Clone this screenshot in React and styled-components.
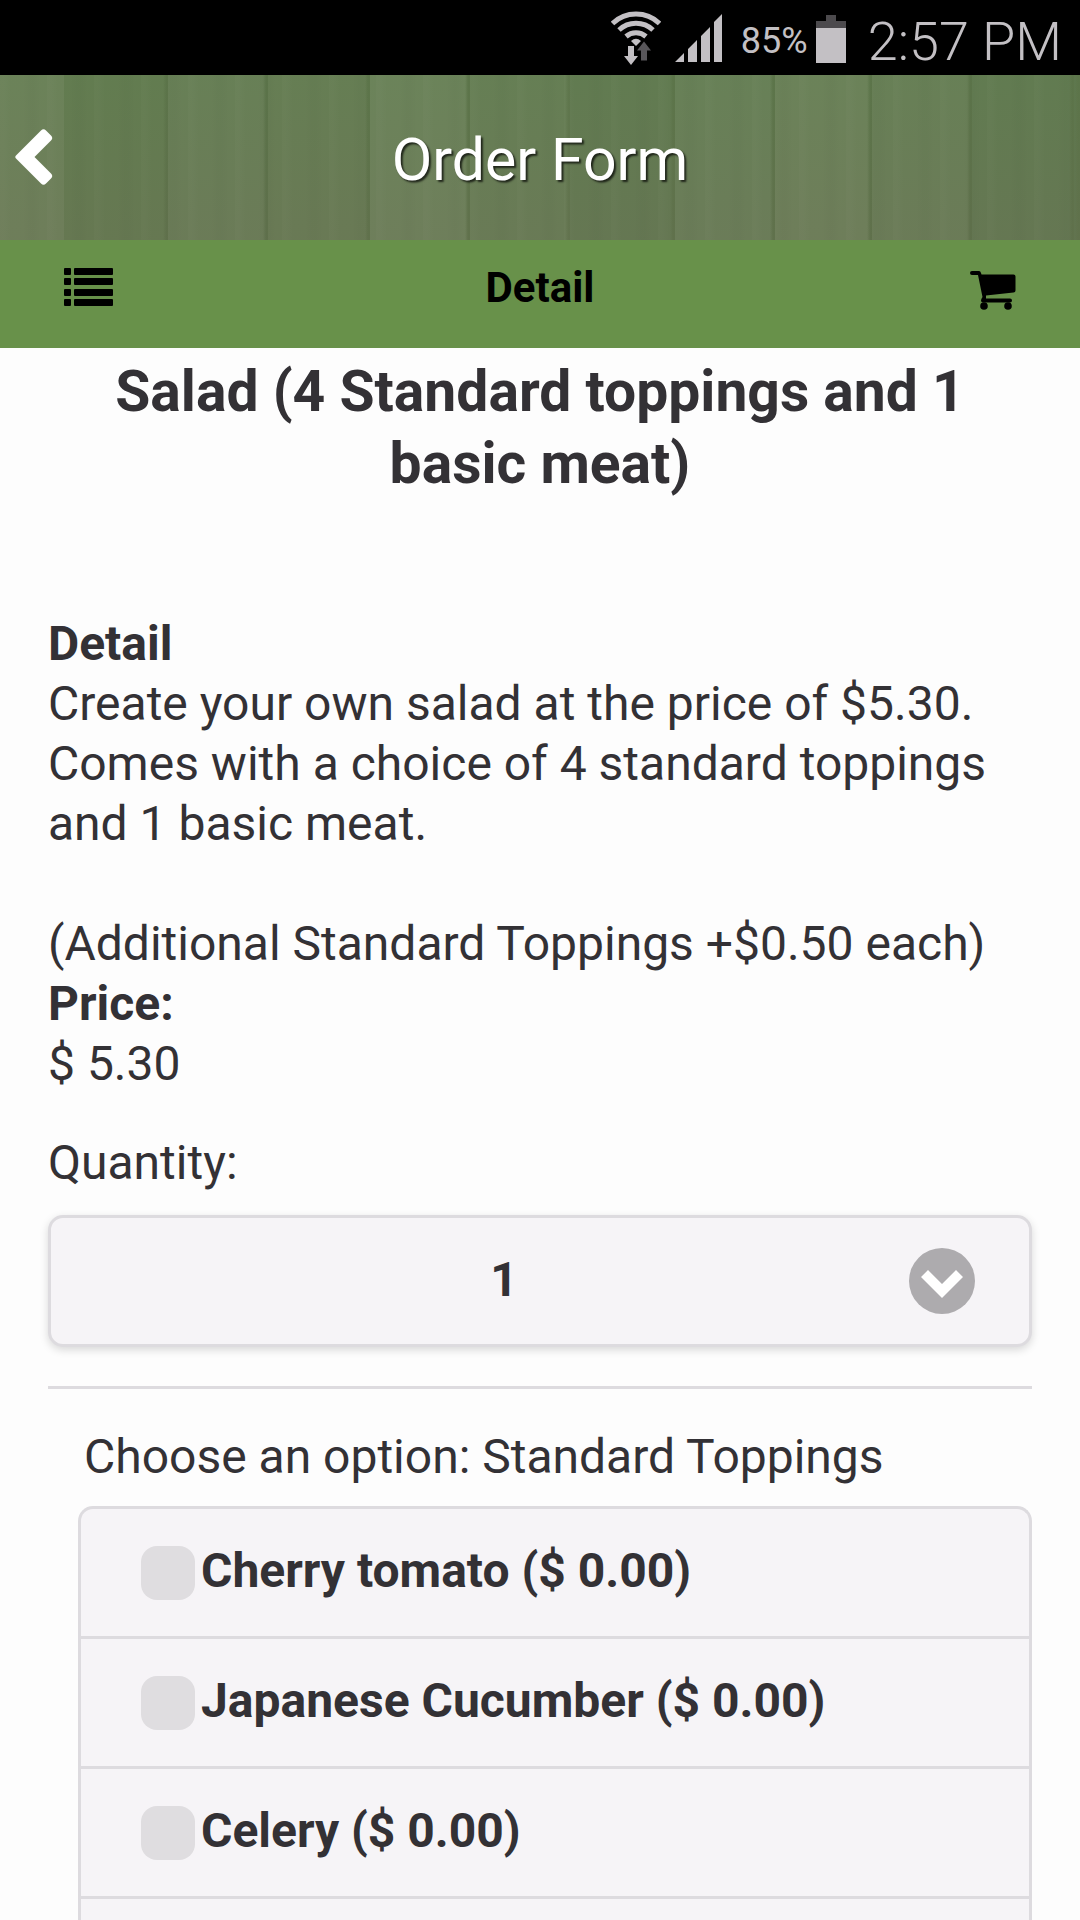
import React, { useState } from 'react';
import styled, { createGlobalStyle } from 'styled-components';

const GlobalStyle = createGlobalStyle`
  *, *::before, *::after { box-sizing: border-box; }
  body {
    margin: 0;
    background: #fdfdfd;
    color: #333135;
    font-family: Roboto, "Liberation Sans", sans-serif;
    font-size: 48px;
    line-height: 60px;
  }
`;

const Screen = styled.div`
  display: flex;
  flex-direction: column;
  height: 100vh;
  overflow: hidden;
`;

const StatusBar = styled.div`
  flex: none;
  display: flex;
  justify-content: flex-end;
  align-items: center;
  height: 75px;
  padding: 0 18px;
  background: #000;
  color: #c3c0c4;

  svg { display: block; flex: none; }
`;

const SignalGroup = styled.span`
  margin-left: 14px;
`;

const BatteryLevel = styled.span`
  margin: 6px 8px 0 18px;
  font-size: 36px;
`;

const BatteryGroup = styled.span`
  margin-top: 2px;
`;

const Clock = styled.span`
  margin: 8px 0 0 22px;
  font-size: 54px;
  font-weight: 300;
`;

const planks = [
  [0, 64, '#6c815a'],
  [64, 168, '#627a50'],
  [168, 268, '#687e57'],
  [268, 370, '#667c54'],
  [370, 470, '#6c825b'],
  [470, 570, '#667d55'],
  [570, 675, '#617951'],
  [675, 775, '#687f58'],
  [775, 872, '#6c815a'],
  [872, 972, '#687e57'],
  [972, 1074, '#617951'],
  [1074, 1080, '#5d754d'],
];

const percent = (x) => `${(x / 10.8).toFixed(2)}%`;

const plankStops = planks
  .map(([from, to, tone], i) => {
    const seam = i === 0 ? tone : '#5b7249';
    return `${tone} ${percent(from)}, ${tone} ${percent(to - 5)}, ${seam} ${percent(to - 2)}, ${seam} ${percent(to)}`;
  })
  .join(', ');

const TitleBar = styled.header`
  flex: none;
  display: grid;
  grid-template-columns: 120px 1fr 120px;
  align-items: center;
  height: 165px;
  background:
    linear-gradient(180deg, rgba(100, 140, 80, 0.12), rgba(120, 110, 90, 0.18)),
    repeating-linear-gradient(90deg, rgba(255, 255, 255, 0.02) 0 4px, transparent 11px 23px, rgba(0, 0, 0, 0.02) 30px 34px, transparent 41px 47px),
    linear-gradient(90deg, ${plankStops});
`;

const Title = styled.h1`
  margin: 0;
  padding-top: 4px;
  color: #fff;
  font-size: 59px;
  font-weight: 400;
  line-height: 72px;
  text-align: center;
  text-shadow: 2px 2px 2px rgba(0, 0, 0, 0.7);
`;

const IconButton = styled.button`
  display: flex;
  justify-content: ${(p) => (p.$end ? 'flex-end' : 'flex-start')};
  align-items: center;
  height: 100%;
  padding: 0 ${(p) => p.$inset}px;
  border: 0;
  background: none;
  color: ${(p) => (p.$light ? '#fff' : '#000')};
  cursor: pointer;
`;

const Toolbar = styled.nav`
  flex: none;
  display: grid;
  grid-template-columns: 200px 1fr 200px;
  align-items: center;
  height: 108px;
  padding-bottom: 12px;
  background: #68914a;
`;

const ToolbarTitle = styled.h2`
  margin: 0;
  color: #000;
  font-size: 42px;
  font-weight: 700;
  line-height: 48px;
  text-align: center;
`;

const Content = styled.main`
  flex: 1;
  display: flex;
  flex-direction: column;
  min-height: 0;
  padding: 8px 48px 0;
`;

const ItemName = styled.h3`
  margin: 0 0 114px;
  padding: 0 48px;
  font-size: 57px;
  font-weight: 700;
  line-height: 72px;
  text-align: center;
`;

const Details = styled.dl`
  margin: 0 0 39px;

  dt { font-weight: 700; }
  dd { margin: 0; }
  p { margin: 0 0 60px; }
  p:last-child { margin: 0; }
`;

const FieldLabel = styled.label`
  margin-bottom: 22px;
`;

const SelectBox = styled.div`
  display: grid;
  align-items: center;

  > * { grid-area: 1 / 1; }
  svg { justify-self: end; margin-right: 57px; pointer-events: none; }
`;

const Select = styled.select`
  appearance: none;
  width: 100%;
  height: 132px;
  padding: 0 117px 3px 45px;
  border: 3px solid #dddbdf;
  border-radius: 15px;
  background: #f6f4f7;
  box-shadow: 0 3px 9px rgba(0, 0, 0, 0.15);
  color: inherit;
  font: 700 48px Roboto, "Liberation Sans", sans-serif;
  text-align: center;
  text-align-last: center;
`;

const Divider = styled.hr`
  width: 100%;
  height: 3px;
  margin: 39px 0 38px;
  border: 0;
  background: #dddbdf;
`;

const Options = styled.fieldset`
  flex: 1;
  display: flex;
  flex-direction: column;
  min-width: 0;
  min-height: 0;
  margin: 0 0 0 30px;
  padding: 0;
  border: 0;
`;

const OptionsLegend = styled.legend`
  padding: 0 6px;
  margin-bottom: 19px;
`;

const OptionList = styled.div`
  flex: 1;
  border: solid #dddbdf;
  border-width: 3px 3px 0;
  border-radius: 15px 15px 0 0;
  background: #f6f4f7;
`;

const Option = styled.label`
  display: flex;
  align-items: center;
  gap: 6px;
  height: 130px;
  padding-left: 60px;
  border-bottom: 3px solid #dddbdf;
  font-weight: 700;
`;

const OptionName = styled.span`
  padding-bottom: 4px;
`;

const Checkbox = styled.input`
  appearance: none;
  flex: none;
  width: 54px;
  height: 54px;
  margin: 0;
  border-radius: 16px;
  background: #dfdde0;

  &:checked { background: #68914a; }
`;

const WifiIcon = () => (
  <svg width="50" height="54" viewBox="0 0 50 54" aria-hidden="true">
    <g fill="none" stroke="#c3c0c4" strokeWidth="5">
      <path d="M1.5 12.500a34 34 0 0 1 47 0" />
      <path d="M8 19a25 25 0 0 1 34 0" />
      <path d="M15 25.500a15.500 15.500 0 0 1 20 0" />
    </g>
    <path d="M20 30q5-4.500 10 0l-5 5z" fill="#c3c0c4" />
    <path d="M17 35h6v10h4l-7 9-7-9h4z" fill="#c3c0c4" />
    <path d="M30 49.500v-10h-4l7-9 7 9h-4v10z" fill="#58565a" />
  </svg>
);

const SignalIcon = () => (
  <svg width="48" height="48" viewBox="0 0 48 48" fill="#c3c0c4" aria-hidden="true">
    <path d="M0 48l9-9v9zM13 35l9-9v22h-9zM26 22l9-9v35h-9zM39 8l8-8v48h-8z" />
  </svg>
);

const BatteryIcon = () => (
  <svg width="30" height="48" viewBox="0 0 30 48" aria-hidden="true">
    <path d="M10 0h10v6h10v7H0V6h10z" fill="#4c4a4d" />
    <path d="M0 13h30v35H0z" fill="#c3c0c4" />
  </svg>
);

const BackIcon = () => (
  <svg width="38" height="58" viewBox="0 0 38 58" fill="currentColor" aria-hidden="true">
    <path d="M26 1.500q2.500-2.500 5 0l5 5q2.500 2.500 0 5L19.500 28 36 44.500q2.500 2.500 0 5l-5 5q-2.500 2.500-5 0L1.500 30q-2.500-2 0-4z" />
  </svg>
);

const ListIcon = () => (
  <svg width="49" height="40" viewBox="0 0 49 40" fill="currentColor" aria-hidden="true">
    {[0, 10, 21, 31].map((y) => (
      <g key={y}>
        <rect y={y} width="7" height="7" rx="1" />
        <rect x="10" y={y} width="39" height="7" rx="1" />
      </g>
    ))}
  </svg>
);

const CartIcon = () => (
  <svg width="46" height="43" viewBox="0 -4 46 43" fill="currentColor" aria-hidden="true">
    <path d="M2 0h7q1.500 0 2 2l.5 1.500H43.500q2 0 2 2v14q0 1.800-2 2L16 24.500v3h24q2 0 2 2t-2 2H13q-2 0-2-2 0-1.500 1.500-3.500L8 4H2Q0 4 0 2t2-2z" />
    <circle cx="14" cy="35" r="3.800" />
    <circle cx="38" cy="35" r="3.800" />
  </svg>
);

const ArrowIcon = () => (
  <svg width="66" height="66" viewBox="0 0 66 66" aria-hidden="true">
    <circle cx="33" cy="33" r="33" fill="#adabae" />
    <path d="M12 29l7-7 14 14 14-14 7 7-21 21z" fill="#fff" />
  </svg>
);

const toppings = ['Cherry tomato ($ 0.00)', 'Japanese Cucumber ($ 0.00)', 'Celery ($ 0.00)'];

export default function App() {
  const [quantity, setQuantity] = useState('1');

  return (
    <Screen>
      <GlobalStyle />
      <StatusBar>
        <WifiIcon />
        <SignalGroup><SignalIcon /></SignalGroup>
        <BatteryLevel>85%</BatteryLevel>
        <BatteryGroup><BatteryIcon /></BatteryGroup>
        <Clock>2:57 PM</Clock>
      </StatusBar>
      <TitleBar>
        <IconButton $inset={15} $light aria-label="Back"><BackIcon /></IconButton>
        <Title>Order Form</Title>
      </TitleBar>
      <Toolbar>
        <IconButton $inset={64} aria-label="Menu"><ListIcon /></IconButton>
        <ToolbarTitle>Detail</ToolbarTitle>
        <IconButton $inset={64} $end aria-label="Cart"><CartIcon /></IconButton>
      </Toolbar>
      <Content>
        <ItemName>Salad (4 Standard toppings and 1 basic meat)</ItemName>
        <Details>
          <dt>Detail</dt>
          <dd>
            <p>Create your own salad at the price of $5.30. Comes with a choice of 4 standard toppings and 1 basic meat.</p>
            <p>(Additional Standard Toppings +$0.50 each)</p>
          </dd>
          <dt>Price:</dt>
          <dd>$ 5.30</dd>
        </Details>
        <FieldLabel htmlFor="quantity">Quantity:</FieldLabel>
        <SelectBox>
          <Select id="quantity" value={quantity} onChange={(e) => setQuantity(e.target.value)}>
            {['1', '2', '3', '4', '5'].map((n) => <option key={n}>{n}</option>)}
          </Select>
          <ArrowIcon />
        </SelectBox>
        <Divider />
        <Options>
          <OptionsLegend>Choose an option: Standard Toppings</OptionsLegend>
          <OptionList>
            {toppings.map((name) => (
              <Option key={name}>
                <Checkbox type="checkbox" />
                <OptionName>{name}</OptionName>
              </Option>
            ))}
          </OptionList>
        </Options>
      </Content>
    </Screen>
  );
}
